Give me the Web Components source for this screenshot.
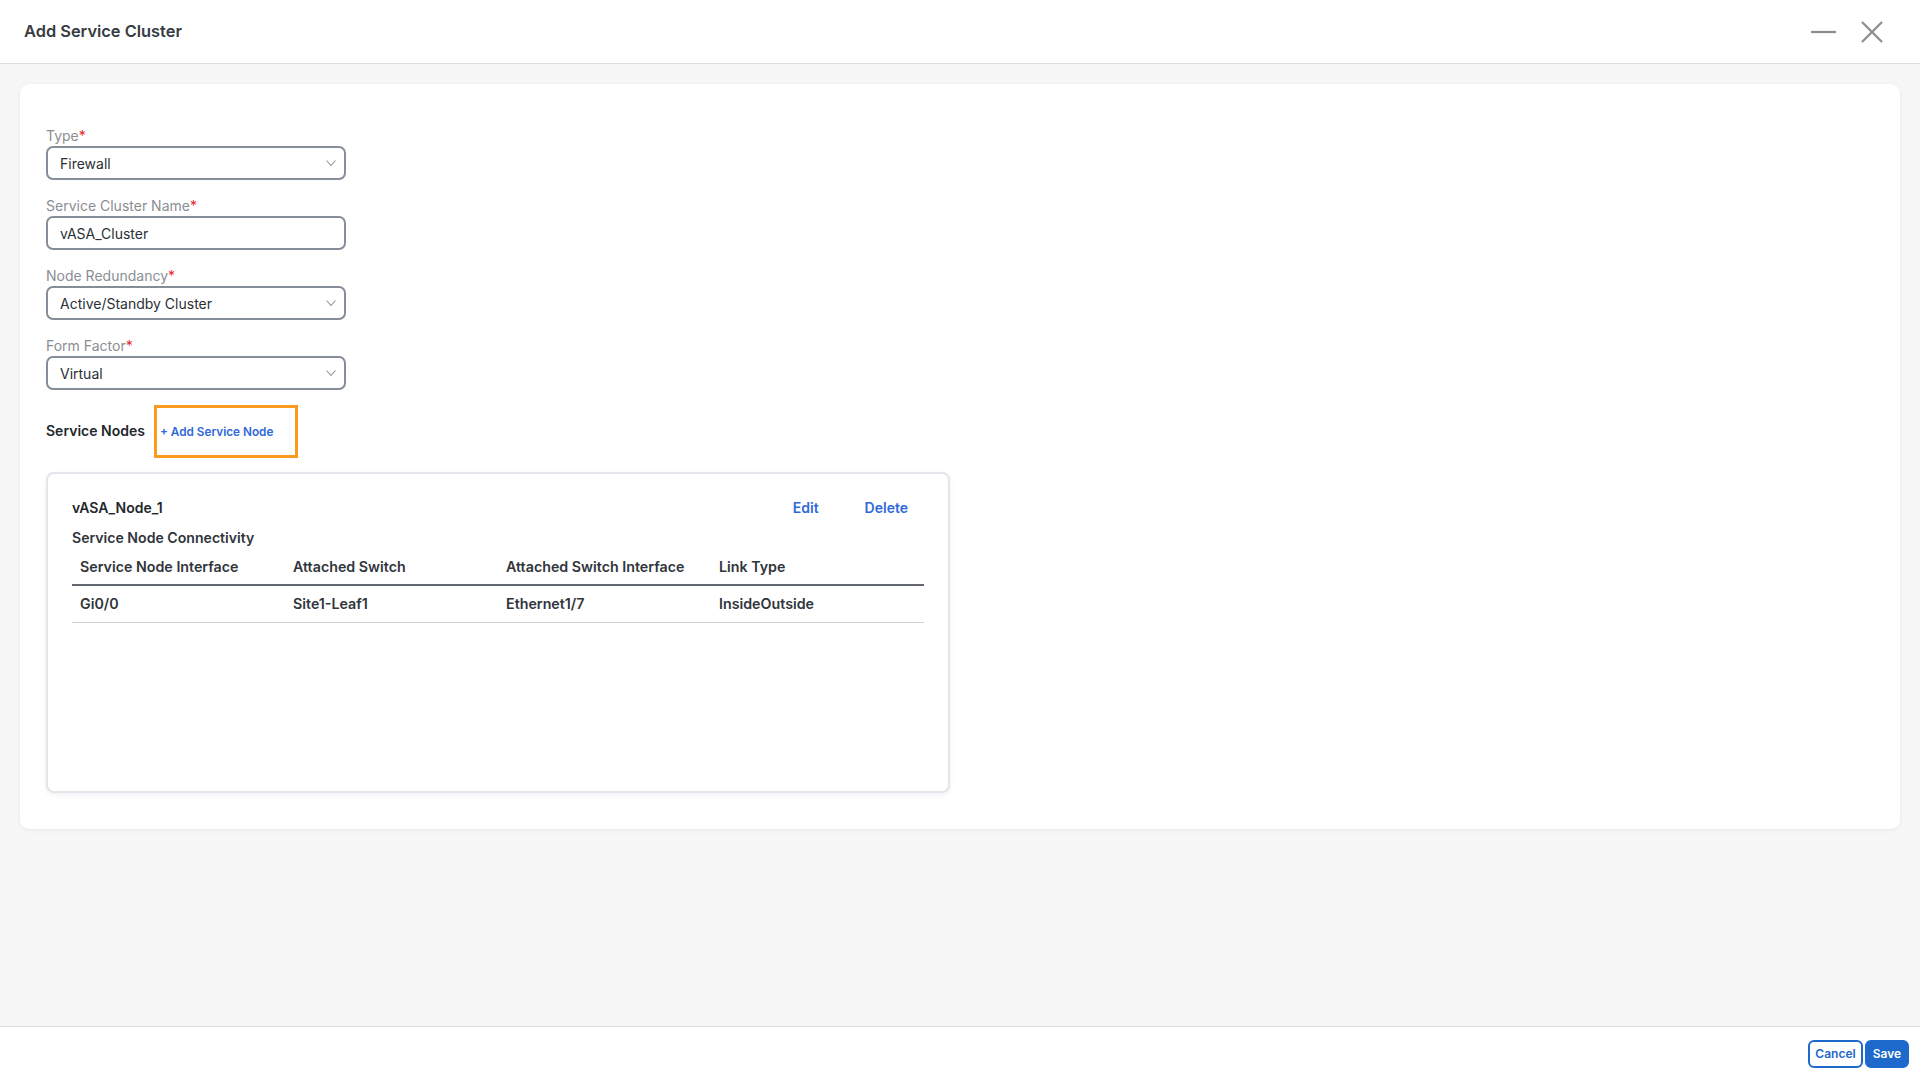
<!DOCTYPE html>
<html>
<head>
<meta charset="utf-8">
<title>Add Service Cluster</title>
<style>
  html, body { margin: 0; height: 100%; }
  body { font-family: Inter, "Liberation Sans", sans-serif; color: #23282e; background: #f7f7f7; overflow: hidden; }
</style>
</head>
<body>
<sc-page>
  <sc-header slot="header" title="Add Service Cluster"></sc-header>
  <sc-card>
    <sc-field label="Type" value="Firewall" select></sc-field>
    <sc-field label="Service Cluster Name" value="vASA_Cluster"></sc-field>
    <sc-field label="Node Redundancy" value="Active/Standby Cluster" select></sc-field>
    <sc-field label="Form Factor" value="Virtual" select></sc-field>
    <sc-nodes-bar></sc-nodes-bar>
    <sc-node name="vASA_Node_1" interface="Gi0/0" switch="Site1-Leaf1" port="Ethernet1/7" link="InsideOutside"></sc-node>
  </sc-card>
  <sc-footer slot="footer"></sc-footer>
</sc-page>

<script>
// @ts-check
(function() {
  // small helper, every element here is just a static shadow tree
  function define(tag, render) {
    customElements.define(tag, class extends HTMLElement {
      connectedCallback() {
        if (this.shadowRoot) return;
        this.attachShadow({ mode: "open" }).innerHTML = render(this);
      }
    });
  }

  define("sc-page", () => `
    <style>
      :host { display: flex; flex-direction: column; height: 1080px; }
      main { flex: 1; padding: 20px 20px 0; }
    </style>
    <slot name="header"></slot>
    <main><slot></slot></main>
    <slot name="footer"></slot>
  `);

  define("sc-header", el => `
    <style>
      :host { display: flex; align-items: center; height: 63px; padding: 0 36px 0 24px; background: #fff; border-bottom: 1px solid #dfdfdf; }
      h1 { flex: 1; margin: 0 0 1px; font-size: 16.4px; font-weight: 600; color: #373c42; }
      svg { display: block; stroke: #8c8c8c; stroke-width: 2.2; fill: none; }
      .min { margin-right: 24px; }
    </style>
    <h1>${el.getAttribute("title")}</h1>
    <svg class="min" width="26" height="4" viewBox="0 0 26 4"><path d="M1 2H26"/></svg>
    <svg width="24" height="24" viewBox="0 0 24 24"><path d="M2 2L22 22M22 2L2 22"/></svg>
  `);

  define("sc-card", () => `
    <style>
      :host { display: block; box-sizing: border-box; height: 745px; padding: 42px 26px 0; background: #fff; border-radius: 9px; box-shadow: 0 1px 4px rgba(40,50,70,.08); }
    </style>
    <slot></slot>
  `);

  define("sc-field", el => `
    <style>
      :host { display: block; width: 300px; height: 70px; }
      label { display: block; height: 20px; font-size: 14px; line-height: 20px; color: #8a8e94; }
      i { font-style: normal; color: #e5262b; }
      div { box-sizing: border-box; display: flex; align-items: center; justify-content: space-between; height: 34px; padding: 1px 12px 0; border: 2px solid #858d98; border-radius: 7px; background: #fff; font-size: 14px; color: #2b3036; }
      svg { stroke: #8b929b; stroke-width: 1.1; fill: none; margin-right: -5px; margin-top: -2px; }
    </style>
    <label>${el.getAttribute("label")}<i>*</i></label>
    <div><span>${el.getAttribute("value")}</span>${el.hasAttribute("select")
      ? '<svg width="12" height="8" viewBox="0 0 12 8"><path d="M1.5 1.5L6 6.5L10.5 1.5"/></svg>' : ""}</div>
  `);

  define("sc-nodes-bar", () => `
    <style>
      :host { display: flex; align-items: center; margin-top: -1px; height: 52px; }
      b { width: 108px; font-size: 14px; font-weight: 600; color: #23282e; margin-top: -1px; }
      span { box-sizing: border-box; display: flex; align-items: center; width: 144px; height: 53px; padding: 1px 0 0 3px; border: 3px solid #fa9a1e; font-size: 11.75px; font-weight: 600; color: #2f69d9; }
    </style>
    <b>Service Nodes</b><span>+ Add Service Node</span>
  `);

  define("sc-node", el => `
    <style>
      :host { display: block; box-sizing: border-box; width: 904px; height: 321px; margin-top: 15px; padding: 24px 24px 0 24px; border: 2px solid #e2e5ea; border-radius: 8px; background: #fff; box-shadow: 0 2px 5px rgba(60,70,110,.07); font-size: 14px; font-weight: 600; color: #23282e; }
      .top { display: flex; height: 20px; line-height: 20px; margin-bottom: 10px; }
      .top b { flex: 1; font-weight: 600; }
      .top a { color: #2f69d9; margin-right: 16px; }
      .top a + a { margin-left: 30px; }
      .sub { height: 20px; line-height: 20px; color: #30353b; font-size: 14.1px; }
      table { width: 852px; border-collapse: collapse; table-layout: fixed; margin-top: 3px; }
      th, td { padding: 0 8px; text-align: left; font-weight: 600; font-size: 14.25px; color: #30353b; box-sizing: border-box; }
      th { height: 34px; padding-bottom: 3px; border-bottom: 2px solid #63676f; }
      td { height: 37px; padding-bottom: 1px; border-bottom: 1px solid #cfd1d4; }
    </style>
    <div class="top"><b>${el.getAttribute("name")}</b><a>Edit</a><a>Delete</a></div>
    <div class="sub">Service Node Connectivity</div>
    <table>
      <tr><th>Service Node Interface</th><th>Attached Switch</th><th>Attached Switch Interface</th><th>Link Type</th></tr>
      <tr><td>${el.getAttribute("interface")}</td><td>${el.getAttribute("switch")}</td><td>${el.getAttribute("port")}</td><td>${el.getAttribute("link")}</td></tr>
    </table>
  `);

  define("sc-footer", () => `
    <style>
      :host { display: flex; justify-content: flex-end; align-items: center; gap: 2px; height: 53px; padding: 0 11px 0 0; background: #fff; border-top: 1px solid #dfdfdf; }
      button { box-sizing: border-box; height: 28px; border: 2px solid #1d69cc; border-radius: 6px; padding: 0; font: 600 12px Inter, "Liberation Sans", sans-serif; }
      .c { width: 55px; background: #fff; color: #1d69cc; }
      .s { width: 44px; background: #1d69cc; color: #fff; }
    </style>
    <button class="c">Cancel</button><button class="s">Save</button>
  `);
})();
</script>
</body>
</html>
